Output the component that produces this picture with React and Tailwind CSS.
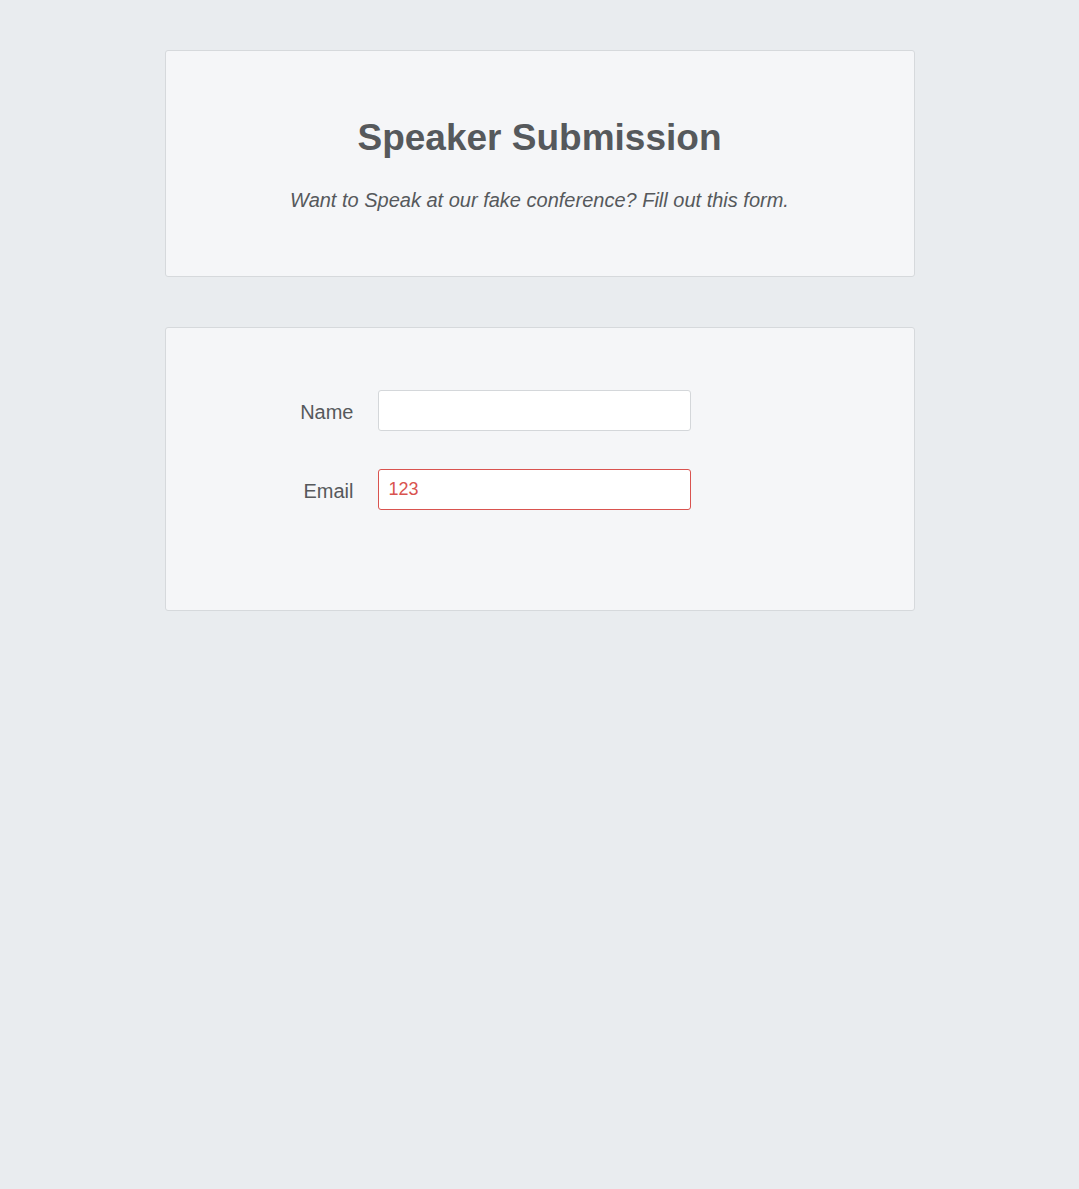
import React, { useState } from "react";

const App = () => {
  const [name, setName] = useState("");
  const [email, setEmail] = useState("123");

  return (
    <div className="min-h-screen w-full bg-[#e9ecef] pt-[50px] font-['Liberation_Sans',Arial,sans-serif] text-[#56595c]">
      <div className="mx-auto w-[750px] flex flex-col gap-[50px]">
        {/* Header card */}
        <div className="rounded-[3px] border border-[#d6d9dc] bg-[#f5f6f8] pt-[67px] pb-[61px] text-center">
          <h1 className="text-[37px] leading-[40px] font-bold">Speaker Submission</h1>
          <p className="mt-[27px] text-[20px] leading-[30px] italic">
            Want to Speak at our fake conference? Fill out this form.
          </p>
        </div>

        {/* Form card */}
        <div className="rounded-[3px] border border-[#d6d9dc] bg-[#f5f6f8] pt-[62px] pb-[100px]">
          <form className="flex flex-col gap-[38px]" onSubmit={(e) => e.preventDefault()}>
            <div className="flex items-center gap-[24px]">
              <label className="w-[188px] text-right text-[20px] leading-[24px] pt-[2px]">Name</label>
              <input
                className="h-[41px] w-[313px] rounded-[3px] border border-[#d4d7da] bg-white px-[10px] text-[18px] outline-none"
                value={name}
                onChange={(e) => setName(e.target.value)}
              />
            </div>
            <div className="flex items-center gap-[24px]">
              <label className="w-[188px] text-right text-[20px] leading-[24px] pt-[2px]">Email</label>
              <input
                className="h-[41px] w-[313px] rounded-[3px] border border-[#d9534f] bg-white px-[10px] text-[18px] text-[#d9534f] outline-none"
                value={email}
                onChange={(e) => setEmail(e.target.value)}
              />
            </div>
          </form>
        </div>
      </div>
    </div>
  );
};

export default App;
